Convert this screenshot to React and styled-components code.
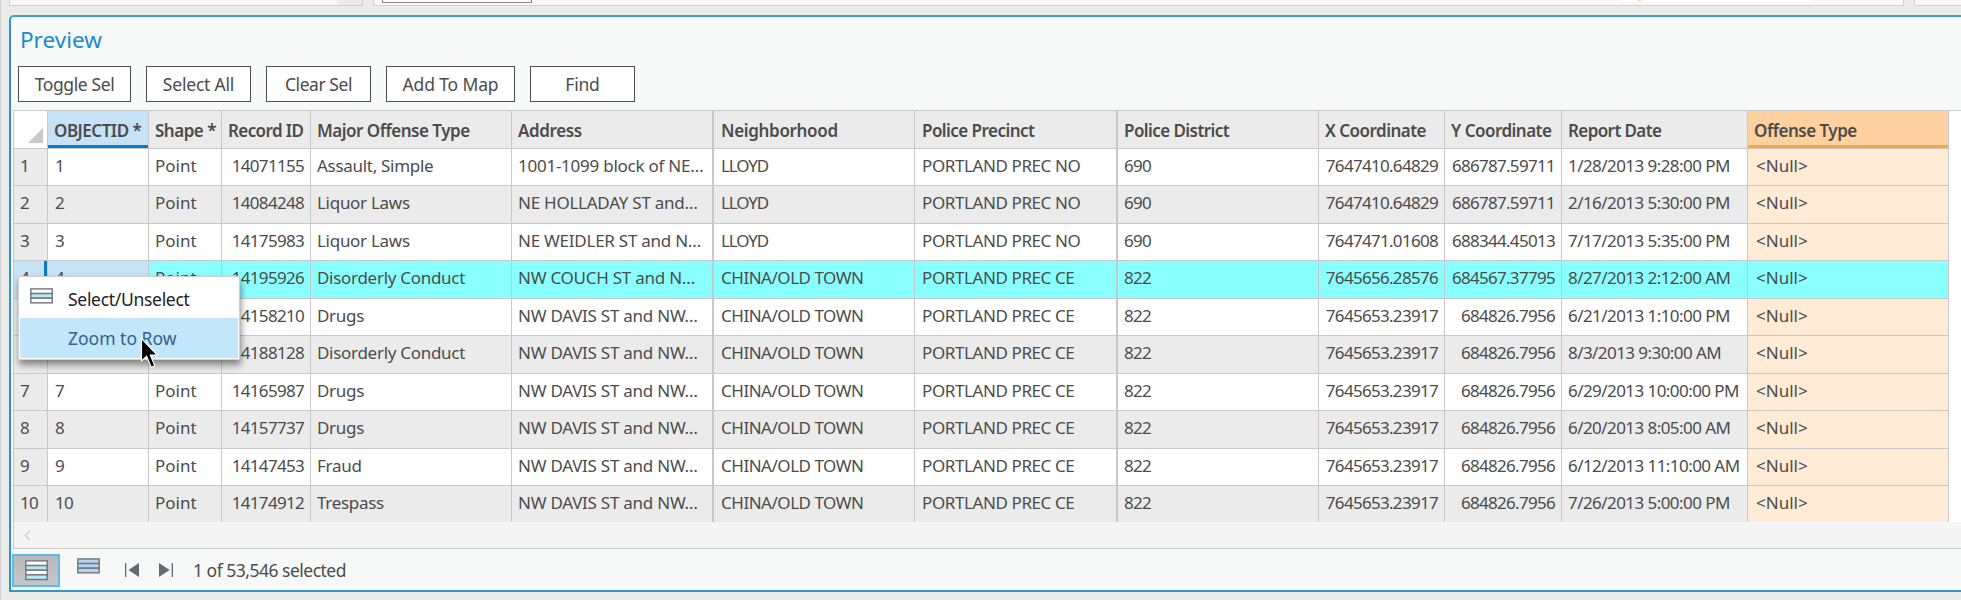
import React from "react";
import styled, { createGlobalStyle } from "styled-components";

const Global = createGlobalStyle`
  * { box-sizing: border-box; }
  body { margin: 0; background: #ebebeb; font-family: "Noto Sans", "Open Sans", sans-serif; font-size: 17px; color: #4c4c4c; overflow: hidden; }
`;

const Screen = styled.div`
  position: relative;
  width: 1961px;
  height: 600px;
  overflow: hidden;
  display: flex;
  flex-direction: column;
  border-left: 1px solid #d0d0d0;
  background: #ebebeb;
`;

/* Bottom edges of the panes above the preview */
const TopStrip = styled.div`
  display: flex;
  flex: none;
  height: 15px;
  padding-left: 8px;
`;
const TopPane = styled.div`
  flex: none;
  width: ${(p) => p.$w}px;
  height: 6px;
  margin-right: ${(p) => p.$gap || 0}px;
  padding: 0 ${(p) => p.$pr || 0}px 0 ${(p) => p.$pl || 0}px;
  display: flex;
  justify-content: space-between;
  background: #f7f9f8;
  border: solid #cfcfcf;
  border-width: 0 1px 1px;
`;
const Track = styled.div`
  width: 25px;
  height: 5px;
  margin-left: auto;
  background: #ebebeb;
`;
const InputEdge = styled.div`
  width: 150px;
  height: 3px;
  background: #fff;
  border: solid #858585;
  border-width: 0 1px 1px;
`;
const WhiteStrip = styled.div`
  width: 194px;
  height: 2px;
  padding-left: 20px;
  background: #fff;
`;
const OrangeTick = styled.div`
  width: 3px;
  height: 1px;
  background: #f5d3a8;
`;

const Panel = styled.section`
  flex: none;
  height: 577px;
  margin-left: 8px;
  border: 2px solid #3d9fd5;
  border-left-color: #2b93d0;
  border-bottom-color: #3395d0;
  border-right: 0;
  border-top-left-radius: 5px;
  background: #f7f9f8;
  display: flex;
  flex-direction: column;
`;
const Title = styled.div`
  flex: none;
  height: 49px;
  padding: 6px 0 0 9px;
  font-size: 22.5px;
  line-height: 33px;
  color: #1b8acc;
`;
const Toolbar = styled.div`
  flex: none;
  display: flex;
  gap: 15px;
  height: 44px;
  padding-left: 7px;
`;
const Button = styled.button`
  width: ${(p) => p.$w}px;
  height: 36px;
  margin: 0;
  padding: 0;
  border: 1px solid #4c4c4c;
  background: #fff;
  font: inherit;
  font-size: 17.5px;
  line-height: 34px;
  letter-spacing: ${(p) => p.$ls}px;
  color: inherit;
`;

const Grid = styled.div`
  flex: none;
  height: 412px;
  margin-left: 2px;
  overflow: hidden;
  border: solid #cacaca;
  border-width: 1px 0 0 1px;
  background: #fff;
`;
const Row = styled.div`
  display: grid;
  grid-template-columns: 34px 101px 73px 89px 201px 202px 201px 203px 201px 126px 117px 186px 201px;
  width: 1935px;
  height: 37.5px;
  background: ${(p) => (p.$selected ? "#8affff" : p.$alt ? "#ebebeb" : "#fff")};
`;
const Cell = styled.div`
  min-width: 0;
  overflow: hidden;
  white-space: nowrap;
  padding: 0 6px 0 ${(p) => p.$pl || 6}px;
  line-height: 33px;
  letter-spacing: ${(p) => p.$ls ?? -0.4}px;
  text-align: ${(p) => (p.$right ? "right" : "left")};
  border: solid #c8c8c8;
  border-width: 0 ${(p) => (p.$thick ? 2 : 1)}px 1px 0;
  background: ${(p) => p.$bg || "transparent"};
  ${(p) => p.$current && "box-shadow: inset -3px 0 #0c7cc6;"}
`;
const Head = styled(Cell)`
  font-weight: 600;
  line-height: 39px;
  ${(p) => p.$accent && `box-shadow: inset 0 -3px ${p.$accent};`}
`;
const Corner = styled(Cell)`
  display: flex;
  align-items: flex-end;
  justify-content: flex-end;
  padding: 0 4px 5px;
  background: #fff;
`;
const Scroll = styled.div`
  flex: none;
  height: 27px;
  margin-left: 2px;
  padding: 8px 0 0 10px;
  background: #f5f5f5;
  border: solid #cacaca;
  border-width: 0 0 1px 1px;
  svg { display: block; }
`;

const Footer = styled.div`
  display: flex;
  align-items: flex-start;
  padding: 5px 0 0 1px;
`;
const ViewButton = styled.div`
  flex: none;
  width: 48px;
  height: 33px;
  border: 2px solid #5bbcec;
  background: linear-gradient(#b9b9bd, #c6c6ca);
  display: flex;
  align-items: center;
  justify-content: center;
`;
const IconSlot = styled.div`
  margin: ${(p) => p.$mt}px 0 0 ${(p) => p.$ml}px;
  svg { display: block; }
`;
const Status = styled.div`
  margin-left: 20px;
  font-size: 17.5px;
  line-height: 32px;
  letter-spacing: -0.5px;
`;

const Menu = styled.div`
  position: absolute;
  left: 17px;
  top: 276px;
  width: 222px;
  height: 84px;
  padding: 2px 1px 1px;
  background: #fff;
  border: 1px solid #cfcfcf;
  box-shadow: 1px 5px 7px rgba(0, 0, 0, 0.45);
`;
const Item = styled.div`
  display: flex;
  height: ${(p) => (p.$on ? 40 : 39)}px;
  padding-left: 10px;
  font-size: 17.5px;
  line-height: 40px;
  letter-spacing: ${(p) => p.$ls}px;
  background: ${(p) => (p.$on ? "#c2e6fa" : "#fff")};
  color: ${(p) => (p.$on ? "#31618d" : "#222")};
`;
const ItemIcon = styled.div`
  width: 38px;
  padding-top: 9px;
  svg { display: block; }
`;
const Cursor = styled.svg`
  position: absolute;
  left: 138px;
  top: 336px;
`;

function RowsIcon({ fills }) {
  const h = fills.length * 4.5 + 2;
  return (
    <svg width="23" height={h + 0.5} viewBox={`0 0 23 ${h + 0.5}`} fill="none" stroke="#73767a" strokeWidth="1.4">
      {fills.map((f, i) => (
        <rect key={i} x="0.8" y={0.9 + i * 4.65} width="21.4" height="4.65" fill={f} />
      ))}
    </svg>
  );
}

const BLUE = "#b4d4ee";
const CYAN = "#b5e9f5";

const heads = [
  ["OBJECTID *", -0.5], ["Shape *", -0.5], ["Record ID", -0.6], ["Major Offense Type", -0.5],
  ["Address", -0.4], ["Neighborhood", -0.33], ["Police Precinct", -0.55], ["Police District", -0.57],
  ["X Coordinate", -0.52], ["Y Coordinate", -0.52], ["Report Date", -0.6], ["Offense Type", -0.5],
];

const NW = "NW DAVIS ST and NW…";
const OLD = "CHINA/OLD TOWN";
const NO = "PORTLAND PREC NO";
const CE = "PORTLAND PREC CE";
const rows = [
  ["14071155", "Assault, Simple", "1001-1099 block of NE…", "LLOYD", NO, "690", "7647410.64829", "686787.59711", "1/28/2013 9:28:00 PM"],
  ["14084248", "Liquor Laws", "NE HOLLADAY ST and…", "LLOYD", NO, "690", "7647410.64829", "686787.59711", "2/16/2013 5:30:00 PM"],
  ["14175983", "Liquor Laws", "NE WEIDLER ST and N…", "LLOYD", NO, "690", "7647471.01608", "688344.45013", "7/17/2013 5:35:00 PM"],
  ["14195926", "Disorderly Conduct", "NW COUCH ST and N…", OLD, CE, "822", "7645656.28576", "684567.37795", "8/27/2013 2:12:00 AM"],
  ["14158210", "Drugs", NW, OLD, CE, "822", "7645653.23917", "684826.7956", "6/21/2013 1:10:00 PM"],
  ["14188128", "Disorderly Conduct", NW, OLD, CE, "822", "7645653.23917", "684826.7956", "8/3/2013 9:30:00 AM"],
  ["14165987", "Drugs", NW, OLD, CE, "822", "7645653.23917", "684826.7956", "6/29/2013 10:00:00 PM"],
  ["14157737", "Drugs", NW, OLD, CE, "822", "7645653.23917", "684826.7956", "6/20/2013 8:05:00 AM"],
  ["14147453", "Fraud", NW, OLD, CE, "822", "7645653.23917", "684826.7956", "6/12/2013 11:10:00 AM"],
  ["14174912", "Trespass", NW, OLD, CE, "822", "7645653.23917", "684826.7956", "7/26/2013 5:00:00 PM"],
];
const spacing = [-0.7, -0.29, -0.25, -0.48, -0.4, -0.7, -0.7, -0.7, -0.56];

export default function App() {
  return (
    <Screen>
      <Global />
      <TopStrip>
        <TopPane $w={354} $gap={10}><Track /></TopPane>
        <TopPane $w={1531} $gap={10} $pl={8} $pr={91}>
          <InputEdge />
          <WhiteStrip><OrangeTick /></WhiteStrip>
        </TopPane>
        <TopPane $w={60} />
      </TopStrip>
      <Panel>
        <Title>Preview</Title>
        <Toolbar>
          <Button $w={113} $ls={-0.4}>Toggle Sel</Button>
          <Button $w={105} $ls={-0.2}>Select All</Button>
          <Button $w={105} $ls={-0.45}>Clear Sel</Button>
          <Button $w={129} $ls={-0.15}>Add To Map</Button>
          <Button $w={105} $ls={-0.2}>Find</Button>
        </Toolbar>
        <Grid>
          <Row $alt>
            <Corner>
              <svg width="15" height="15" viewBox="0 0 15 15"><path d="M15 0V15H0Z" fill="#c9c9c9" /></svg>
            </Corner>
            {heads.map(([name, ls], i) => (
              <Head
                key={name}
                $ls={ls}
                $pl={i === 5 || i === 6 ? 7 : 6}
                $thick={i === 4 || i === 6}
                $bg={i === 0 ? "#c7e2f5" : i === 11 ? "#ffd1a0" : ""}
                $accent={i === 0 ? "#087dc8" : i === 11 ? "#ffa53f" : ""}
              >
                {name}
              </Head>
            ))}
          </Row>
          {rows.map((r, n) => {
            const selected = n === 3;
            return (
              <Row key={n} $alt={n % 2 === 1} $selected={selected}>
                <Cell $bg={selected ? "#c7e2f5" : "#ebebeb"} $current={selected} $ls={-0.6}>{n + 1}</Cell>
                <Cell $pl={7} $bg={selected ? "#c7e2f5" : ""} $ls={-0.6}>{n + 1}</Cell>
                <Cell $ls={0}>Point</Cell>
                {r.map((v, i) => (
                  <Cell
                    key={i}
                    $pl={i === 3 || i === 4 ? 7 : 6}
                    $right={i === 0 || i === 6 || i === 7}
                    $thick={i === 2 || i === 4}
                    $ls={v === "LLOYD" ? -1.1 : spacing[i]}
                  >
                    {v}
                  </Cell>
                ))}
                <Cell $pl={8} $ls={0} $bg={selected ? "" : "#ffebd6"}>&lt;Null&gt;</Cell>
              </Row>
            );
          })}
        </Grid>
        <Scroll>
          <svg width="7" height="11" viewBox="0 0 7 11"><path d="M6 0.8L1.2 5.5L6 10.2" fill="none" stroke="#d2d2d2" strokeWidth="1.6" /></svg>
        </Scroll>
        <Footer>
          <ViewButton><RowsIcon fills={["#fff", CYAN, "#fff", CYAN]} /></ViewButton>
          <IconSlot $ml={17} $mt={4}><RowsIcon fills={[BLUE, BLUE, BLUE]} /></IconSlot>
          <IconSlot $ml={25} $mt={9}>
            <svg width="14" height="14" viewBox="0 0 14 14" fill="#666a6e"><path d="M0 0H1.3V14H0ZM14 0V14L3.4 7Z" /></svg>
          </IconSlot>
          <IconSlot $ml={20} $mt={9}>
            <svg width="14" height="14" viewBox="0 0 14 14" fill="#666a6e"><path d="M12.7 0H14V14H12.7ZM0 0V14L10.6 7Z" /></svg>
          </IconSlot>
          <Status>1 of 53,546 selected</Status>
        </Footer>
      </Panel>
      <Menu>
        <Item $ls={-0.3}>
          <ItemIcon><RowsIcon fills={["#fff", CYAN, "#fff"]} /></ItemIcon>
          Select/Unselect
        </Item>
        <Item $on $ls={0}>
          <ItemIcon />
          Zoom to Row
        </Item>
      </Menu>
      <Cursor width="24" height="36" viewBox="0 0 24 36">
        <path d="M2.5 2.5V25L7.6 20.2L12.2 31.2L15.8 29.7L11.3 19H18.2Z" fill="#000" stroke="#fff" strokeWidth="1.1" />
      </Cursor>
    </Screen>
  );
}
